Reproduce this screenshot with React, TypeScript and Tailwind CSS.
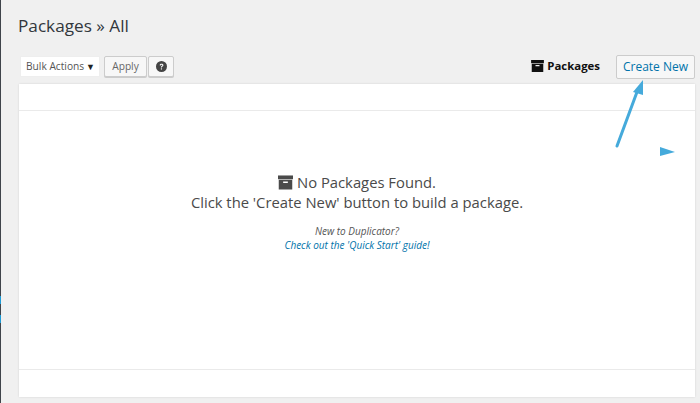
import React from 'react';

const fontStack = { fontFamily: '"Open Sans", "Noto Sans", sans-serif' };

const ArchiveIcon = ({ className }: { className: string }) => (
  <svg viewBox="0 0 16 15" className={className} fill="currentColor">
    <path d="M0 0h16v4H0z" />
    <path fillRule="evenodd" d="M.8 4.6h14.4V15H.8zM5.5 6.4v1.5h5V6.4z" />
  </svg>
);

const HelpIcon = () => (
  <svg viewBox="0 0 12 12" className="w-[11px] h-[11px]">
    <circle cx="6" cy="6" r="6" fill="#444" />
    <path d="M4 4.6c.1-2 4.1-2 4.1.1 0 1.3-1.6 1.3-1.6 2.4H5.3c0-1.7 1.5-1.6 1.5-2.4 0-.8-1.4-.7-1.5.1z" fill="#f7f7f7" />
    <path d="M5.3 8h1.3v1.3H5.3z" fill="#f7f7f7" />
  </svg>
);

export default function App() {
  return (
    <div className="relative w-[700px] h-[403px] overflow-hidden bg-[#f0f0f0] flex" style={fontStack}>
      {/* admin menu edge */}
      <div className="w-px h-full bg-[#3f444a] flex flex-col pt-[296px] shrink-0">
        <div className="h-[8px] bg-[#1d9bd6]" />
        <div className="h-[11px]" />
        <div className="h-[8px] bg-[#1d9bd6]" />
      </div>

      <div className="flex-1 pl-[17px] pr-[5px] pt-[14px] flex flex-col min-w-0">
        <h1 className="text-[17.2px] leading-[24px] text-[#32373c] font-normal">Packages » All</h1>

        <div className="flex items-start mt-[18px] h-[28px]">
          <div className="ml-[2px] w-[80px] h-[21px] bg-white flex items-center justify-between pl-[5px] pr-[4px] text-[10.2px] text-[#555] border border-[#eee]">
            <span>Bulk Actions</span>
            <span className="text-[9px] text-[#222]">▼</span>
          </div>
          <div className="ml-[4px] w-[43px] h-[21px] flex items-center justify-center bg-[#f7f7f7] border border-[#ccc] rounded-[2px] shadow-[0_1px_0_#ccc] text-[10.2px] text-[#666]">
            Apply
          </div>
          <div className="ml-[1px] w-[26px] h-[21px] flex items-center justify-center bg-[#f7f7f7] border border-[#ccc] rounded-[2px] shadow-[0_1px_0_#ccc]">
            <HelpIcon />
          </div>
          <div className="ml-auto flex items-center gap-[3px] mt-[2px] text-[#111]">
            <ArchiveIcon className="w-[13px] h-[12px]" />
            <span className="text-[11.4px] font-bold leading-[16px]">Packages</span>
          </div>
          <div className="ml-[16px] w-[79px] h-[24px] -mt-[1px] flex items-center justify-center bg-[#f7f7f7] border border-[#ccc] rounded-[2px] text-[12px] text-[#0073aa]">
            Create New
          </div>
        </div>

        <div className="h-[313px] ml-[1px] bg-white shadow-[0_0_2px_rgba(0,0,0,0.12)] flex flex-col">
          <div className="h-[27px] border-b border-[#eaeaea] shrink-0" />
          <div className="flex-1 flex flex-col items-center pt-[61px]">
            <div className="flex items-center gap-[4px] text-[14.8px] leading-[20px] text-[#4a4a4a]">
              <ArchiveIcon className="w-[15px] h-[15px]" />
              <span>No Packages Found.</span>
            </div>
            <div className="text-[14.8px] leading-[20px] text-[#4a4a4a]">Click the 'Create New' button to build a package.</div>
            <div className="mt-[12px] text-[10px] leading-[14px] italic text-[#555]">New to Duplicator?</div>
            <div className="text-[10px] leading-[14px] italic text-[#0073aa]">Check out the 'Quick Start' guide!</div>
          </div>
          <div className="h-[28px] border-t border-[#eaeaea] shrink-0" />
        </div>
      </div>

      {/* annotation arrows drawn over the page */}
      <svg className="absolute left-[600px] top-[75px] w-[90px] h-[85px]" viewBox="0 0 90 85">
        <path d="M17 71 L37 17" stroke="#45aadb" strokeWidth="3" strokeLinecap="round" fill="none" />
        <path d="M43 5 L33 17 L43 20 Z" fill="#45aadb" />
        <path d="M60 72 L75 77 L60 81 Z" fill="#45aadb" />
      </svg>
    </div>
  );
}
